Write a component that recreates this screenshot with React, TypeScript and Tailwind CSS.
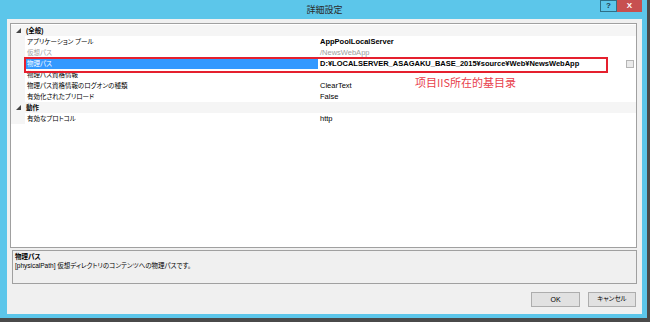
import React from 'react';

interface Row {
  label: string;
  value?: string;
  category?: boolean;
  bold?: boolean;
  gray?: boolean;
  selected?: boolean;
  ellipsis?: boolean;
}

const rows: Row[] = [
  { label: '(全般)', category: true },
  { label: 'アプリケーション プール', value: 'AppPoolLocalServer', bold: true },
  { label: '仮想パス', value: '/NewsWebApp', gray: true },
  {
    label: '物理パス',
    value: 'D:¥LOCALSERVER_ASAGAKU_BASE_2015¥source¥Web¥NewsWebApp',
    bold: true,
    selected: true,
    ellipsis: true,
  },
  { label: '物理パス資格情報', value: '' },
  { label: '物理パス資格情報のログオンの種類', value: 'ClearText' },
  { label: '有効化されたプリロード', value: 'False' },
  { label: '動作', category: true },
  { label: '有効なプロトコル', value: 'http' },
];

const Expander = () => (
  <svg width="5" height="5" viewBox="0 0 5 5">
    <polygon points="5,0 5,5 0,5" fill="#444" />
  </svg>
);

const App: React.FC = () => {
  return (
    <div className="w-[650px] h-[322px] bg-white font-['Liberation_Sans','Noto_Sans_CJK_JP',sans-serif] [font-feature-settings:'palt'] text-black">
      <div className="w-[650px] h-[322px] flex flex-col bg-[#5cc6ea] border-r-[3px] border-b-[4px] border-[#4a4a4a] pl-[7px] pr-[5px] pb-[4px]">
        {/* Title bar */}
        <div className="relative h-[19px] shrink-0 flex items-center justify-center">
          <span className="text-[9px] text-[#2b2b2b] font-['Noto_Sans_CJK_JP',sans-serif]">詳細設定</span>
          <div className="absolute right-0 top-0 flex">
            <div className="w-[17px] h-[12px] border border-[#2e6f86] flex items-center justify-center text-[8px] font-bold text-[#1d3d4a] leading-none">
              ?
            </div>
            <div className="w-[25px] h-[12px] bg-[#c75050] flex items-center justify-center text-[8px] font-bold text-white leading-none">
              X
            </div>
          </div>
        </div>

        {/* Content */}
        <div className="flex-1 bg-[#f0f0f0] flex flex-col pt-[4px] pl-[3px] pr-[5px]">
          {/* Property grid */}
          <div className="relative h-[225px] shrink-0 bg-white border border-[#a0a0a0] pt-[1px] text-[7.5px]">
            {rows.map((r, i) =>
              r.category ? (
                <div key={i} className="flex h-[11px] items-center bg-[#f5f5f5]">
                  <div className="w-[14px] h-full flex items-center justify-center">
                    <Expander />
                  </div>
                  <span className="pl-[1px] font-bold text-[6.5px]">{r.label}</span>
                </div>
              ) : (
                <div key={i} className="flex h-[11px] items-center">
                  <div className="w-[14px] h-full bg-[#f5f5f5]" />
                  <div
                    className={`w-[293px] h-full flex items-center pl-[2px] text-[6.5px] ${
                      r.selected ? 'bg-[#3399ff] text-white' : r.gray ? 'text-[#a0a0a0]' : ''
                    }`}
                  >
                    {r.label}
                  </div>
                  <div className="flex-1 h-full flex items-center pl-[2px]">
                    <span
                      className={`${r.bold ? 'font-bold' : 'font-normal'} ${r.gray ? 'text-[#a0a0a0]' : ''}`}
                    >
                      {r.value}
                    </span>
                    {r.ellipsis && (
                      <div className="ml-auto mr-[2px] w-[8px] h-[8px] border border-[#b5b5b5] bg-[#eaeaea]" />
                    )}
                  </div>
                </div>
              )
            )}

            {/* annotation */}
            <div className="absolute left-[13px] top-[33px] w-[584px] h-[16px] border-2 border-[#e5202e]" />
            <div className="absolute left-[404px] top-[50px] text-[11px] leading-[16px] text-[#e8404c] font-['Noto_Sans_CJK_SC',sans-serif] [font-feature-settings:normal]">
              项目IIS所在的基目录
            </div>
          </div>

          {/* Description */}
          <div className="mt-[2px] ml-[2px] h-[34px] shrink-0 border border-[#a0a0a0] bg-[#f0f0f0] px-[2px] pt-[1px] text-[6.5px] leading-[9px]">
            <div className="font-bold">物理パス</div>
            <div>[physicalPath] 仮想ディレクトリのコンテンツへの物理パスです。</div>
          </div>

          {/* Buttons */}
          <div className="mt-[8px] flex justify-end gap-[8px] pr-[1px]">
            <button className="w-[49px] h-[15px] bg-[#e1e1e1] border border-[#adadad] text-[7px] leading-none">
              OK
            </button>
            <button className="w-[48px] h-[15px] bg-[#e1e1e1] border border-[#adadad] text-[6.5px] leading-none">
              キャンセル
            </button>
          </div>
        </div>
      </div>
    </div>
  );
};

export default App;
